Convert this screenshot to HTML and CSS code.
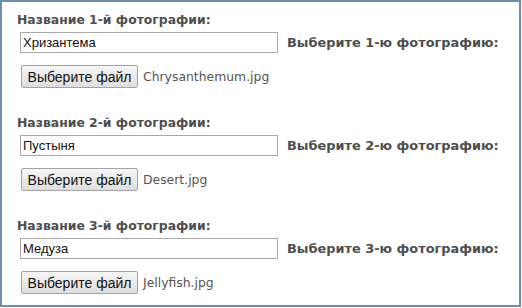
FILE: index.html
```html
<!DOCTYPE html>
<html lang="ru">
<head>
<meta charset="utf-8">
<link rel="stylesheet" href="styles.css">
</head>
<body>
<div class="frame">
  <div class="photo">
    <div class="title">Название 1-й фотографии:</div>
    <div class="row">
      <input class="name" type="text" value="Хризантема">
      <span class="choose">Выберите 1-ю фотографию:</span>
    </div>
    <div class="row file-row">
      <button class="file-btn" type="button">Выберите файл</button>
      <span class="file-name">Chrysanthemum.jpg</span>
    </div>
  </div>
  <div class="photo">
    <div class="title">Название 2-й фотографии:</div>
    <div class="row">
      <input class="name" type="text" value="Пустыня">
      <span class="choose">Выберите 2-ю фотографию:</span>
    </div>
    <div class="row file-row">
      <button class="file-btn" type="button">Выберите файл</button>
      <span class="file-name">Desert.jpg</span>
    </div>
  </div>
  <div class="photo">
    <div class="title">Название 3-й фотографии:</div>
    <div class="row">
      <input class="name" type="text" value="Медуза">
      <span class="choose">Выберите 3-ю фотографию:</span>
    </div>
    <div class="row file-row">
      <button class="file-btn" type="button">Выберите файл</button>
      <span class="file-name">Jellyfish.jpg</span>
    </div>
  </div>
</div>
</body>
</html>
```
FILE: styles.css
```css
html, body {
  margin: 0;
  padding: 0;
  background: #f7f9fb;
}
.frame {
  box-sizing: border-box;
  width: 521px;
  height: 307px;
  border: 2px solid #6f8db0;
  background: #ffffff;
  padding: 10px 0 0 15px;
}
.photo {
  margin-bottom: 27px;
}
.title {
  height: 16px;
  line-height: 16px;
  font-family: "DejaVu Sans", sans-serif;
  font-weight: bold;
  font-size: 12.4px;
  color: #4e4e4e;
  white-space: nowrap;
}
.row {
  display: flex;
  align-items: center;
  margin-top: 4px;
  padding-left: 3px;
}
.file-row {
  margin-top: 12px;
  padding-left: 4px;
}
.name {
  box-sizing: border-box;
  width: 258px;
  height: 21px;
  margin: 0;
  padding: 0 2px;
  border: 1px solid #a9a9a9;
  background: #fff;
  font-family: "Liberation Sans", Arial, sans-serif;
  font-size: 13px;
  color: #111;
  outline: none;
}
.choose {
  margin-left: 9px;
  font-family: "DejaVu Sans", sans-serif;
  font-weight: bold;
  font-size: 12.9px;
  color: #4e4e4e;
  white-space: nowrap;
}
.file-btn {
  box-sizing: border-box;
  width: 117px;
  height: 23px;
  margin: 0;
  padding: 0;
  border: 1px solid #a3a3a3;
  border-radius: 2px;
  background: linear-gradient(#f6f6f6, #dedede);
  font-family: "Liberation Sans", Arial, sans-serif;
  font-size: 14px;
  color: #111;
}
.file-name {
  margin-left: 5px;
  font-family: "DejaVu Sans", sans-serif;
  font-size: 12.4px;
  color: #555;
}
```
